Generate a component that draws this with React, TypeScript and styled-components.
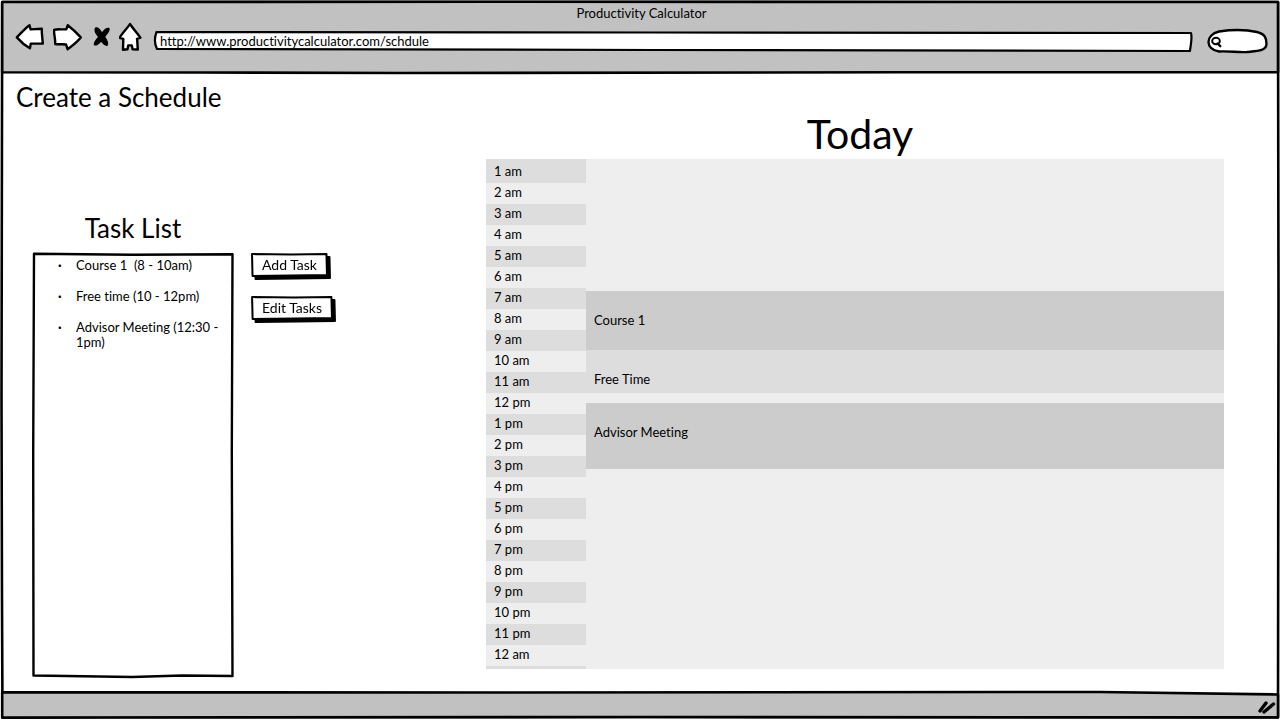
import React from "react";
import styled, { createGlobalStyle } from "styled-components";

const ink = "#000";
const chrome = "#c1c1c1";

const GlobalStyle = createGlobalStyle`
  *, *::before, *::after { box-sizing: border-box; }
  body { margin: 0; background: #fff; }
  body, button, input {
    font-family: Lato, "Liberation Sans", sans-serif;
    font-size: 13px;
    line-height: 16px;
    font-variant-ligatures: none;
    color: ${ink};
  }
  h1, h2, ul, ol, p { margin: 0; padding: 0; font-weight: 400; }
  ul, ol { list-style: none; }
`;

/* Hand-drawn outline that stretches with the box it decorates. */
const Outline = styled.svg`
  position: absolute;
  inset: 0;
  z-index: -1;
  width: 100%;
  height: 100%;
  overflow: visible;
  pointer-events: none;
  stroke: ${ink};
  stroke-linejoin: round;
  stroke-linecap: round;

  path { vector-effect: non-scaling-stroke; }
`;

type SketchProps = { w: number; h: number; d: string; fill?: string; weight?: number };

const Sketch = ({ w, h, d, fill = "none", weight = 2.6 }: SketchProps) => (
  <Outline viewBox={`0 0 ${w} ${h}`} preserveAspectRatio="none" aria-hidden="true">
    <path d={d} fill={fill} strokeWidth={weight} />
  </Outline>
);

const Window = styled.div`
  position: relative;
  isolation: isolate;
  display: flex;
  flex-direction: column;
  min-height: 100vh;
`;

const Header = styled.header`
  position: relative;
  isolation: isolate;
  height: 74px;
  padding: 5px 12px 0 15px;
`;

const WindowTitle = styled.p`
  text-align: center;
`;

const Toolbar = styled.div`
  display: flex;
  align-items: center;
  height: 38px;
  margin-top: 1px;
`;

const NavButtons = styled.nav`
  display: flex;
  align-items: center;
  align-self: flex-start;
  gap: 8px;
  margin-right: 11px;
`;

const NavButton = styled.button`
  display: block;
  padding: 0;
  border: 0;
  background: none;
  cursor: pointer;

  svg {
    display: block;
    fill: #fff;
    stroke: ${ink};
    stroke-width: 2.4;
    stroke-linejoin: round;
    stroke-linecap: round;
  }
`;

const Field = styled.label<{ $width?: number }>`
  position: relative;
  isolation: isolate;
  display: flex;
  align-items: center;
  flex: ${(p) => (p.$width ? `0 0 ${p.$width}px` : "1 1 0")};
  min-width: 0;
  height: ${(p) => (p.$width ? 24 : 20)}px;
  padding: 0 6px 0 ${(p) => (p.$width ? 4 : 6)}px;

  & + & { margin-left: 15px; }
`;

const FieldInput = styled.input`
  flex: 1;
  width: 0;
  min-width: 0;
  padding: 0;
  border: 0;
  outline: 0;
  background: none;
`;

const SearchIcon = styled.svg`
  flex: none;
  fill: #fff;
  stroke: ${ink};
  stroke-width: 2;
  stroke-linecap: round;
`;

const Main = styled.main`
  flex: 1;
  padding: 9px 56px 14px 16px;
`;

const PageTitle = styled.h1`
  font-size: 26px;
  line-height: 28px;
`;

const Columns = styled.div`
  display: flex;
  align-items: flex-start;
`;

const TaskArea = styled.section`
  flex: 0 0 470px;
  padding: 103px 0 0 16px;
`;

const TaskHeading = styled.h2`
  width: 202px;
  margin-bottom: 11px;
  font-size: 26px;
  line-height: 28px;
  text-align: center;
`;

const TaskRow = styled.div`
  display: flex;
  align-items: flex-start;
  gap: 17px;
`;

const TaskBox = styled.ul`
  position: relative;
  isolation: isolate;
  display: flex;
  flex-direction: column;
  gap: 16px;
  width: 202px;
  min-height: 424px;
  padding: 5px 8px 16px 26px;
`;

const Task = styled.li`
  display: flex;
  line-height: 15px;
  white-space: pre-wrap;

  &::before {
    content: "·";
    flex: 0 0 18px;
    font-weight: 700;
  }
`;

const TaskActions = styled.div`
  display: flex;
  flex-direction: column;
  align-items: flex-start;
  gap: 19px;
`;

const ActionButton = styled.button`
  position: relative;
  isolation: isolate;
  height: 24px;
  padding: 0 11px 1px;
  border: 0;
  background: none;
  font-size: 14px;
  filter: drop-shadow(3px 3px 0 ${ink});
  cursor: pointer;
`;

const Day = styled.section`
  flex: 1;
  min-width: 0;
`;

const DayHeading = styled.h2`
  margin-bottom: 2px;
  padding-left: 10px;
  font-size: 41px;
  line-height: 46px;
  text-align: center;
`;

const Calendar = styled.div`
  display: flex;
  background: #eee;
`;

const Hours = styled.ol`
  flex: 0 0 100px;
  padding-bottom: 3px;
  background: #ddd;
`;

const Hour = styled.li`
  height: 21px;
  padding: 1px 8px;
  background: #eee;

  &:nth-child(odd) { background: #ddd; }
  &:first-child { height: 24px; padding-top: 4px; }
`;

const Events = styled.ol`
  flex: 1;
  padding-top: 132px;
`;

const Event = styled.li<{ $height: number; $gap?: number; $soft?: boolean }>`
  height: ${(p) => p.$height}px;
  margin-top: ${(p) => p.$gap ?? 0}px;
  padding: 21px 8px 0;
  background: ${(p) => (p.$soft ? "#ddd" : "#ccc")};
`;

const Footer = styled.footer`
  position: relative;
  isolation: isolate;
  display: flex;
  justify-content: flex-end;
  align-items: center;
  height: 29px;
  padding: 3px 4px 0 0;
`;

const Grip = styled.svg`
  stroke: ${ink};
  stroke-width: 3.4;
  stroke-linecap: round;
  fill: none;
`;

const hours = [
  ...Array.from({ length: 11 }, (_, i) => `${i + 1} am`),
  "12 pm",
  ...Array.from({ length: 11 }, (_, i) => `${i + 1} pm`),
  "12 am",
];

const tasks = ["Course 1  (8 - 10am)", "Free time (10 - 12pm)", "Advisor Meeting (12:30 - 1pm)"];

const BrowserHeader = () => (
  <Header>
    <Sketch w={1280} h={74} fill={chrome} d="M2.200 2 L500 1.800 L1278 2 V72.300 L900 72.300 L400 73 L200 72.500 L2.200 72.200 Z" />
    <WindowTitle>Productivity Calculator</WindowTitle>
    <Toolbar>
      <NavButtons aria-label="Browser">
        <NavButton aria-label="Back">
          <svg width="30" height="30" viewBox="15 22 30 30">
            <path d="M16.8 37.4 C20 34 25 28.500 29.500 25.200 L30.600 29.400 L41.800 28.800 C41.600 34 42.500 39 42.800 43.500 L30.800 43.600 L29.900 48.300 C25 45.500 20 41 16.800 37.400 Z" />
          </svg>
        </NavButton>
        <NavButton aria-label="Forward">
          <svg width="30" height="30" viewBox="53 22 30 30">
            <path d="M54 29.800 C58 28.800 62 29.700 66.400 29.200 L67.800 25.200 C72 28.500 77 33 80.800 37.400 C77 42 72 46 67.600 49.200 L66 44.500 C62 43.700 58.500 44.800 55.200 44 C55.500 39 53.800 34 54 29.800 Z" />
          </svg>
        </NavButton>
        <NavButton aria-label="Stop">
          <svg width="20" height="30" viewBox="91 21 20 30">
            <path
              fill={ink}
              strokeWidth="1.2"
              d="M95.500 27 C98 25.800 100.500 29.500 102 32.200 C103.800 29.500 106 26.500 109 27.400 C110 29.500 106.500 33 104.600 35.800 C106.500 38.500 108.500 42 107.200 44.200 C104.500 45 103 42 101.200 39.800 C99.500 41.800 96.500 44.800 94.400 43.800 C93.600 41.500 96.800 38.500 98.600 36 C96.600 33.500 93.800 29.500 95.500 27 Z"
            />
          </svg>
        </NavButton>
        <NavButton aria-label="Home">
          <svg width="24" height="30" viewBox="119 22 24 30">
            <path d="M130 24 C133 28.500 137 33 140.400 37.600 L137 38.800 C137.600 42 137.400 46 137.800 49.600 L132.600 49.200 L131.800 45.400 H128.200 L127.500 49.200 L123 49.800 L123.300 38.900 L119.600 37.800 C122 33 127 29 130 24 Z" overflow="visible" />
          </svg>
        </NavButton>
      </NavButtons>
      <Field>
        <Sketch w={1038} h={20} weight={2.2} fill="#fff" d="M2.500 1 L500 1.500 L1037 2 C1038.500 8 1036.500 14 1036 20 L500 19 L3 18 C0 12 1 5 2.500 1 Z" />
        <FieldInput aria-label="Address" defaultValue="http://www.productivitycalculator.com/schdule" />
      </Field>
      <Field $width={61}>
        <Sketch w={61} h={24} weight={2.4} fill="#fff" d="M12 2.500 C26 0.500 41 1 50 3 C58 5 59.500 9 59.500 15 C59.500 22 50 22 40 23 C30 23.500 24 22 12 22.500 C-2 20 -2 6 12 2.500 Z" />
        <SearchIcon width="12" height="14" viewBox="0 0 12 14" aria-hidden="true">
          <ellipse cx="5" cy="7" rx="3.800" ry="3.200" />
          <path d="M6.500 9.500 L9.300 12.200" strokeWidth="2.400" />
        </SearchIcon>
        <FieldInput aria-label="Search" />
      </Field>
    </Toolbar>
  </Header>
);

export default function App() {
  return (
    <Window>
      <GlobalStyle />
      <Sketch w={1280} h={720} d="M2.200 2 L1278 2 L1278.500 300 L1278 717.500 L640 717 L120 717.200 L2.500 717.800 L2 600 L1.500 400 Z" />
      <BrowserHeader />
      <Main>
        <PageTitle>Create a Schedule</PageTitle>
        <Columns>
          <TaskArea>
            <TaskHeading>Task List</TaskHeading>
            <TaskRow>
              <TaskBox>
                <Sketch w={202} h={424} weight={2.4} d="M2 0.800 L100 1.800 L200.500 1.300 L199.800 200 L200.500 423 L150 422.500 L100 424 L1.500 422.500 L1.200 200 Z" />
                {tasks.map((task) => (
                  <Task key={task}>{task}</Task>
                ))}
              </TaskBox>
              <TaskActions>
                {["Add Task", "Edit Tasks"].map((label) => (
                  <ActionButton key={label} type="button">
                    <Sketch w={76} h={24} weight={2} fill="#fff" d="M1 1 L40 1.500 L74.500 1 L75 22 L40 22.500 L1.500 23 Z" />
                    {label}
                  </ActionButton>
                ))}
              </TaskActions>
            </TaskRow>
          </TaskArea>
          <Day>
            <DayHeading>Today</DayHeading>
            <Calendar>
              <Hours>
                {hours.map((hour) => (
                  <Hour key={hour}>{hour}</Hour>
                ))}
              </Hours>
              <Events>
                <Event $height={59}>Course 1</Event>
                <Event $height={43} $soft>Free Time</Event>
                <Event $height={66} $gap={10}>Advisor Meeting</Event>
              </Events>
            </Calendar>
          </Day>
        </Columns>
      </Main>
      <Footer>
        <Sketch w={1280} h={29} fill={chrome} d="M2.200 1.200 L500 1.500 L1100 1 L1278 3.500 V26.300 L640 26 L2.200 26.500 Z" />
        <Grip width="18" height="14" viewBox="0 0 18 14" aria-hidden="true">
          <path d="M2 11 L8 3 M6 12 L15.500 4" />
        </Grip>
      </Footer>
    </Window>
  );
}
